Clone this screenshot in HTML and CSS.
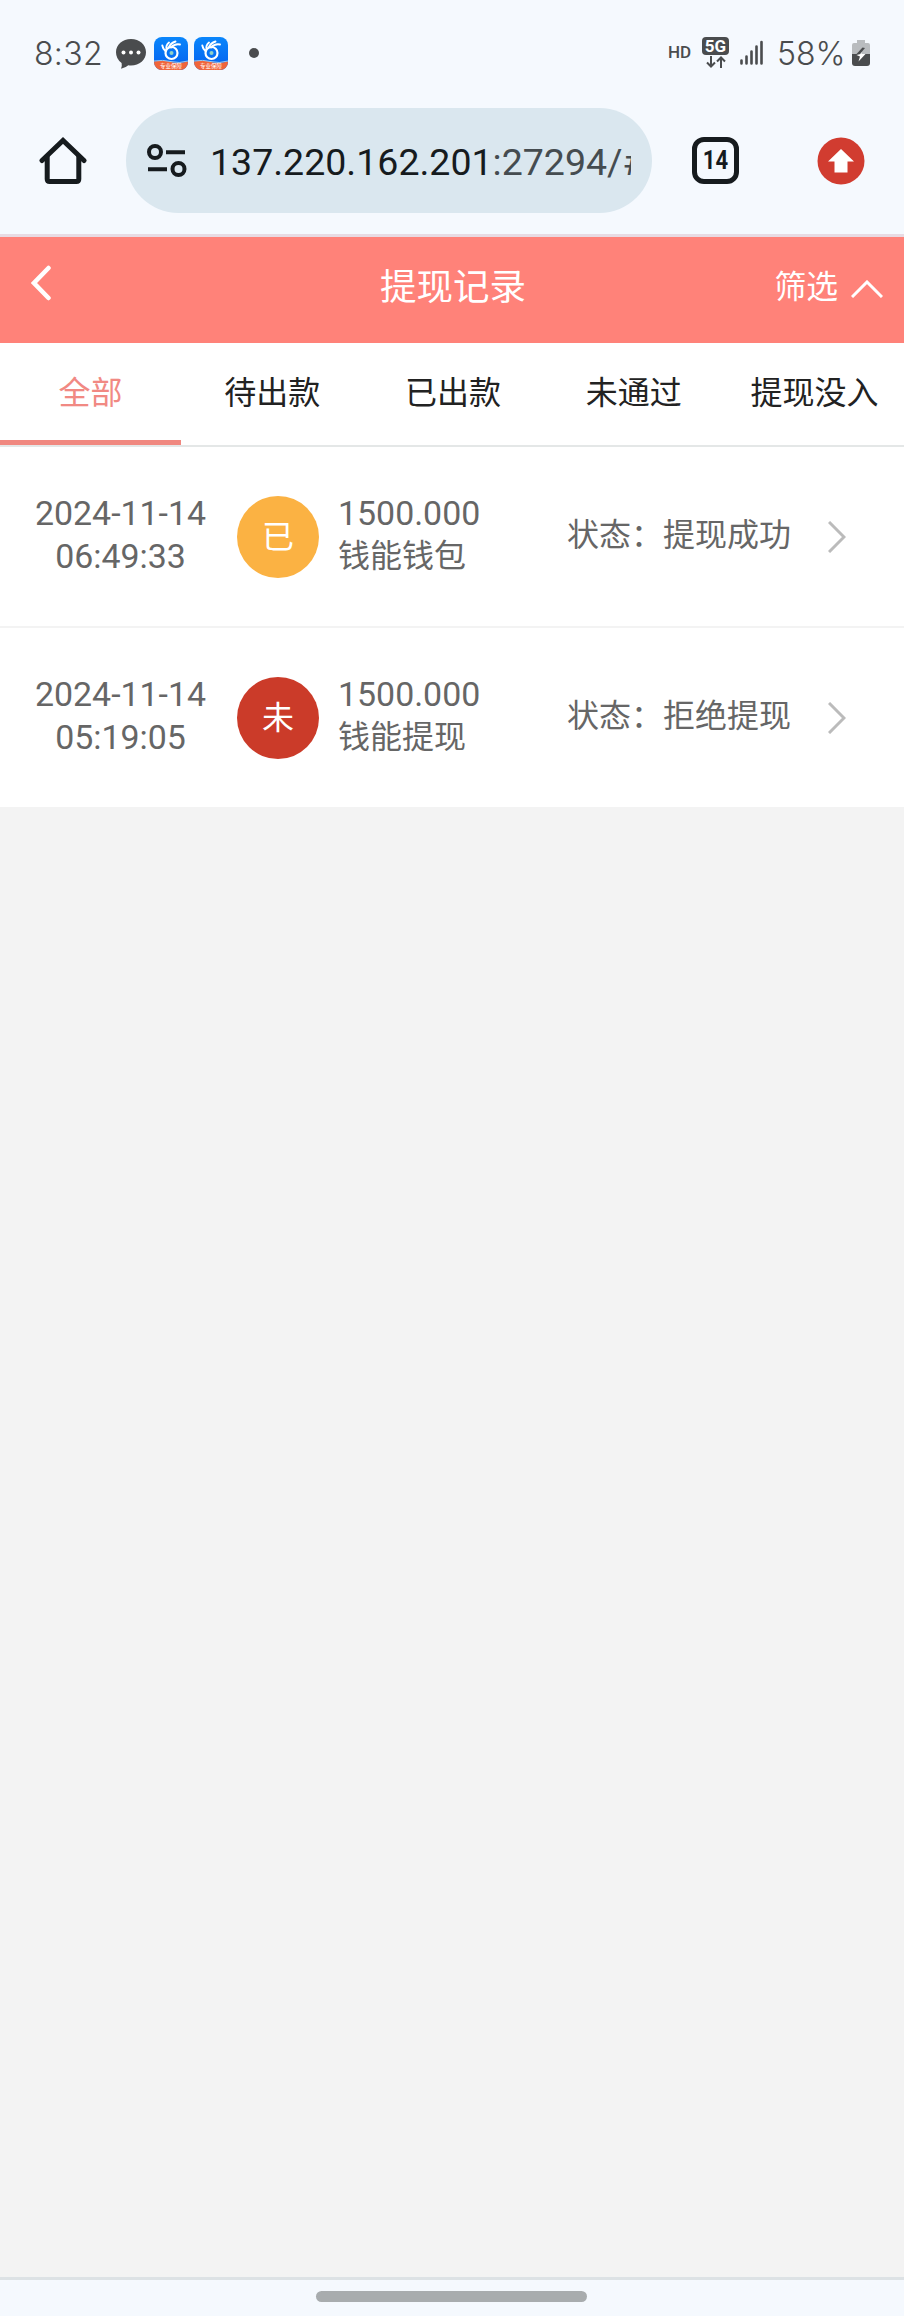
FILE: index.html
```
<!DOCTYPE html>
<html lang="zh-CN">

<head>
    <meta charset="UTF-8">
    <meta name="viewport" content="width=device-width, initial-scale=1">
    <title>提现记录</title>
    <link rel="stylesheet" href="styles.css">
</head>

<body>

    <svg width="0" height="0" class="defs">
        <defs>
            <linearGradient id="appBlue" x1="0" y1="0" x2="0" y2="1">
                <stop offset="0" stop-color="#0a86fb" />
                <stop offset="1" stop-color="#0560ee" />
            </linearGradient>
            <clipPath id="appClip">
                <rect width="34" height="33" rx="8" />
            </clipPath>
            <symbol id="appIcon" viewBox="0 0 34 33">
                <g clip-path="url(#appClip)">
                    <rect width="34" height="33" fill="url(#appBlue)" />
                    <path d="M0 24.500Q9 23 17 25T34 24.500V33H0z" fill="#f0653a" />
                    <path d="M0 24Q9 22.500 17 24.600T34 24" fill="none" stroke="#9cc8ee" stroke-width="1" />
                    <circle cx="17.500" cy="16" r="6" fill="none" stroke="#fff" stroke-width="2.200" />
                    <path d="M11.800 14.500Q8.800 12 8.300 8.500M12.500 12.500Q11.500 8.500 15 5.500M14.500 11Q16.500 6 21.500 4.500M17 10.500Q20.500 6.500 26 7.500" fill="none" stroke="#fff" stroke-width="1.900" stroke-linecap="round" />
                    <circle cx="17.500" cy="16" r="2" fill="#8fd0c8" />
                </g>
            </symbol>
        </defs>
    </svg>

    <!-- phone status bar -->
    <div class="status-bar">
        <span class="time">8:32</span>
        <svg class="chat" width="30" height="30" viewBox="0 0 30 30">
            <path d="M15 0C23.500 0 30 5.800 30 13.200S23.500 26.500 15 26.500Q13.500 26.500 12.300 26.300Q9.500 29 5 29.800Q6.300 27 5.600 24Q0 19.800 0 13.200C0 5.800 6.500 0 15 0z" fill="#4a4c4e" />
            <circle cx="7.500" cy="13.500" r="2" fill="#fff" />
            <circle cx="15" cy="13.500" r="2" fill="#fff" />
            <circle cx="22.500" cy="13.500" r="2" fill="#fff" />
        </svg>
        <span class="app"><svg width="34" height="33"><use href="#appIcon" /></svg><small>专业保障</small></span>
        <span class="app"><svg width="34" height="33"><use href="#appIcon" /></svg><small>专业保障</small></span>
        <span class="dot"></span>
        <span class="hd">HD</span>
        <span class="net">
            <b>5G</b>
            <svg width="20" height="12" viewBox="0 0 20 12" fill="none" stroke="#4a4c4e" stroke-width="2">
                <path d="M5 0V10.500M1 6.500L5 10.500L9 6.500M15 12V1.500M11 5.500L15 1.500L19 5.500" />
            </svg>
        </span>
        <svg class="signal" width="24" height="26" viewBox="0 0 24 26" stroke="#4a4c4e" stroke-width="2.600" stroke-linecap="round">
            <path d="M1.500 20.500V23.500M6.500 16.500V23.500M11.500 11.500V23.500M16.500 6.500V23.500M21.500 2V23.500" />
        </svg>
        <span class="percent">58%</span>
        <svg class="battery" width="18" height="27" viewBox="0 0 18 27">
            <path d="M5 0H13V3H16Q18 3 18 5V14H0V5Q0 3 2 3H5z" fill="#b9bcbf" />
            <path d="M0 14H18V23Q18 26 15 26H3Q0 26 0 23z" fill="#4a4c4e" />
            <path d="M10.500 7.500L4.500 14H8L13 8z" fill="#4a4c4e" />
            <path d="M4.500 15L8.500 14L10 12L9.500 14H13.500L6.500 21.500L8 16.500z" fill="#fff" />
        </svg>
    </div>

    <!-- browser toolbar -->
    <div class="toolbar">
        <svg class="home" width="48" height="48" viewBox="0 0 48 48" fill="none" stroke="#161b1e" stroke-width="5" stroke-linejoin="round" stroke-linecap="round">
            <path d="M3 23.500L24 3.500L45 23.500" stroke-linejoin="miter" />
            <path d="M8.200 20V42Q8.200 44.500 10.700 44.500H37.300Q39.800 44.500 39.800 42V20" />
        </svg>
        <div class="address">
            <svg width="40" height="34" viewBox="0 0 40 34" fill="none" stroke="#161b1e" stroke-width="4">
                <circle cx="8" cy="8" r="6" />
                <path d="M19 8.300H38M1 25.300H20" />
                <circle cx="31.500" cy="25" r="6" />
            </svg>
            <div class="url">137.220.162.201<span>:27294/#</span></div>
        </div>
        <div class="tab-count"><span>14</span></div>
        <svg class="update" width="48" height="48" viewBox="0 0 48 48">
            <circle cx="24" cy="24" r="23.500" fill="#d13c30" />
            <path d="M24 12L37 24.500H30.500V35.500H17.500V24.500H11z" fill="#fff" />
        </svg>
    </div>

    <div class="header">
        <svg class="back" width="20" height="36" viewBox="0 0 20 36" fill="none" stroke="#fff" stroke-width="4.500" stroke-linecap="round">
            <path d="M17.500 3L3 18L17.500 33" />
        </svg>
        <h1>提现记录</h1>
        <div class="filter">
            <span>筛选</span>
            <svg width="32" height="18" viewBox="0 0 32 18" fill="none" stroke="#fff" stroke-width="3">
                <path d="M1 17L16 2L31 17" />
            </svg>
        </div>
    </div>

    <div class="tabs">
        <div class="tab active">全部</div>
        <div class="tab">待出款</div>
        <div class="tab">已出款</div>
        <div class="tab">未通过</div>
        <div class="tab">提现没入</div>
    </div>

    <div class="list">
        <div class="record">
            <div class="date">2024-11-14<br>06:49:33</div>
            <div class="badge done">已</div>
            <div class="amount">1500.000<p>钱能钱包</p></div>
            <div class="state">状态：提现成功</div>
            <svg class="arrow" width="18" height="32" viewBox="0 0 18 32" fill="none" stroke="#bbb" stroke-width="3">
                <path d="M1 1L16 16L1 31" />
            </svg>
        </div>
        <div class="record">
            <div class="date">2024-11-14<br>05:19:05</div>
            <div class="badge fail">未</div>
            <div class="amount">1500.000<p>钱能提现</p></div>
            <div class="state">状态：拒绝提现</div>
            <svg class="arrow" width="18" height="32" viewBox="0 0 18 32" fill="none" stroke="#bbb" stroke-width="3">
                <path d="M1 1L16 16L1 31" />
            </svg>
        </div>
    </div>

    <div class="nav-bar">
        <div class="handle"></div>
    </div>

</body>

</html>
```
FILE: styles.css
```
* {
    box-sizing: border-box;
}

body {
    margin: 0;
    height: 2316px;
    display: flex;
    flex-direction: column;
    background-color: #f3f3f3;
    font-family: Roboto, "Noto Sans CJK SC", sans-serif;
    overflow: hidden;
}

svg {
    display: block;
    flex: none;
}

.defs {
    position: absolute;
}

/* status bar */
.status-bar {
    height: 106px;
    padding: 0 34px 0 34px;
    display: flex;
    align-items: center;
    background-color: #f5f9fe;
    color: #4a4c4e;
    flex: none;
}

.time,
.percent {
    font-family: Inter, sans-serif;
    font-weight: 350;
    font-size: 32px;
    line-height: 40px;
    padding-top: 1px;
}

.time {
    width: 82px;
    letter-spacing: 0.3px;
}

.chat {
    margin-top: 2px;
    margin-right: 8px;
}

.app {
    position: relative;
    margin-right: 6px;
}

.app small {
    position: absolute;
    left: 6px;
    bottom: 1px;
    font-size: 5.5px;
    line-height: 6px;
    color: #fff;
}

.dot {
    width: 10px;
    height: 10px;
    margin-left: 15px;
    border-radius: 50%;
    background-color: #4a4c4e;
}

.hd {
    margin-left: auto;
    width: 34px;
    font-size: 17px;
    font-weight: 500;
    margin-top: -2px;
}

.net {
    width: 27px;
    margin-right: 11px;
    display: flex;
    flex-direction: column;
    align-items: center;
    gap: 1px;
    margin-top: -2px;
}

.net b {
    width: 27px;
    height: 18px;
    border-radius: 4px;
    background-color: #4a4c4e;
    color: #fff;
    font-size: 17px;
    line-height: 19px;
    text-align: center;
}

.percent {
    margin-left: 13px;
    width: 75px;
    white-space: nowrap;
}

.battery {
    margin-top: 1px;
}

/* toolbar */
.toolbar {
    height: 131px;
    padding: 2px 39px 21px 39px;
    display: flex;
    align-items: center;
    background-color: #f5f9fe;
    border-bottom: 3px solid #e8dbe3;
    flex: none;
}

.address {
    width: 526px;
    height: 105px;
    margin-left: 39px;
    padding: 0 21px;
    display: flex;
    align-items: center;
    gap: 23px;
    border-radius: 53px;
    background-color: #dae7ef;
}

.url {
    flex: 1;
    overflow: hidden;
    white-space: nowrap;
    font-size: 37.5px;
    line-height: 50px;
    padding-top: 2px;
    color: #161b1e;
}

.url span {
    color: #454c50;
}

.tab-count {
    width: 47px;
    height: 47px;
    margin-left: 40px;
    border: 5px solid #161b1e;
    border-radius: 12px;
    color: #161b1e;
    font-size: 26px;
    font-weight: bold;
    line-height: 37px;
    text-align: center;
}

.tab-count span {
    display: block;
    transform: scaleX(0.85);
}

.update {
    margin-left: auto;
}

/* page header */
.header {
    height: 106px;
    padding: 0 21px 5px 31px;
    display: grid;
    grid-template-columns: 1fr auto 1fr;
    align-items: center;
    background-color: #ff8279;
    color: #fff;
    flex: none;
}

.back {
    margin-bottom: 9px;
}

.header h1 {
    margin: 0 8px 0 0;
    font-size: 36.5px;
    font-weight: 400;
    line-height: 50px;
}

.filter {
    display: flex;
    justify-content: flex-end;
    align-items: center;
    gap: 13px;
    font-size: 31.8px;
    line-height: 46px;
    padding-bottom: 2px;
}

.filter svg {
    margin-top: 4px;
}

/* tabs */
.tabs {
    height: 104px;
    display: grid;
    grid-template-columns: repeat(5, 1fr);
    background-color: #fff;
    border-bottom: 2px solid #e4e7e7;
    flex: none;
}

.tab {
    padding-left: 2px;
    font-size: 32px;
    line-height: 100px;
    text-align: center;
    white-space: nowrap;
    color: #222;
}

.tab.active {
    height: 102px;
    padding-left: 0;
    color: #f18983;
    border-bottom: 5px solid #f08880;
}

/* records */
.record {
    height: 179px;
    display: flex;
    align-items: center;
    background-color: #fff;
    color: #666;
}

.record:first-child {
    height: 181px;
    border-bottom: 2px solid #f3f3f3;
}

.date,
.amount {
    font-size: 33.9px;
    line-height: 43px;
    padding-bottom: 4px;
}

.date {
    width: 177px;
    margin-left: 32px;
    text-align: center;
    white-space: nowrap;
}

.badge {
    width: 82px;
    height: 82px;
    margin-left: 28px;
    border-radius: 50%;
    color: #fff;
    font-size: 32px;
    line-height: 82px;
    text-align: center;
}

.done {
    background-color: #fbb243;
}

.fail {
    background-color: #cb3b29;
}

.amount {
    width: 229px;
    margin-left: 19px;
}

.amount p {
    margin: 0;
    font-size: 32px;
}

.state {
    font-size: 32px;
    width: 261px;
    padding-bottom: 10px;
}

/* bottom gesture bar */
.nav-bar {
    height: 39px;
    margin-top: auto;
    padding-top: 11px;
    background-color: #f5f9fe;
    border-top: 3px solid #dde2e5;
    flex: none;
}

.handle {
    width: 271px;
    height: 11px;
    margin-left: 316px;
    border-radius: 6px;
    background-color: #a8acae;
}
```
